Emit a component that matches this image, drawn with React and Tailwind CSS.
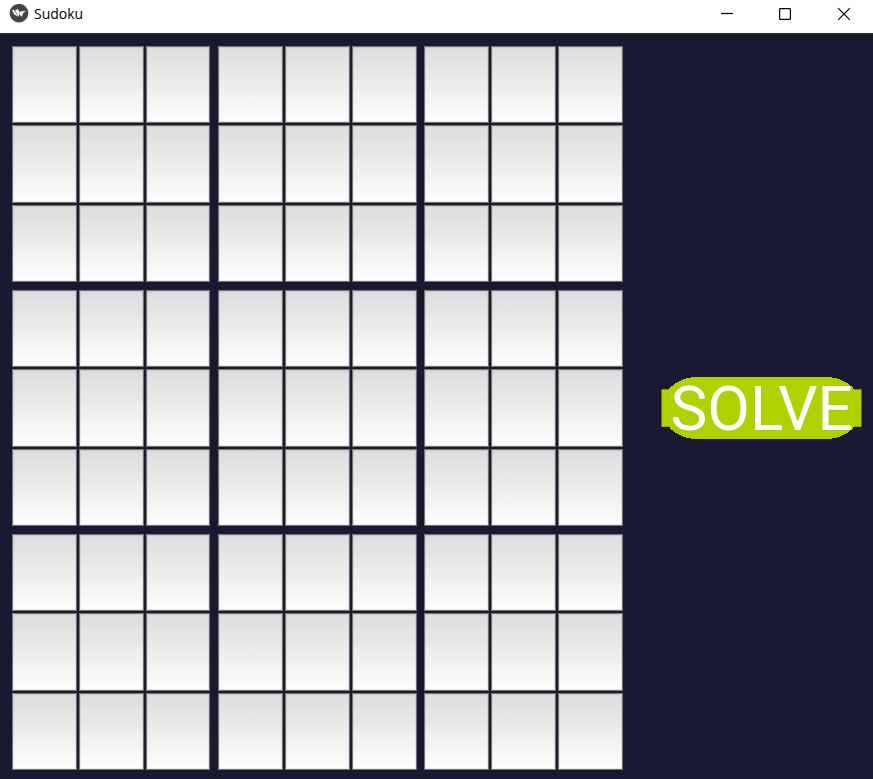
import React from "react";

const three = [0, 1, 2];
const nine = [0, 1, 2, 3, 4, 5, 6, 7, 8];

function TitleBar() {
  return (
    <header className="flex h-[33px] items-start justify-between bg-white">
      <div className="flex h-[27px] items-center pl-[9px]">
        <svg className="mt-px h-5 w-5" viewBox="0 0 20 20">
          <circle cx="10" cy="9.2" r="9.3" fill="#424548" />
          <path d="M2.8 6.2 4.6 5.8 9.6 12.8 5.4 10.4Z" fill="#fff" />
          <path d="M6 6.6 8.6 5 10.8 8.6 9.8 12.4Z" fill="#fff" />
          <path d="M11.2 7.4 17.2 6.8 14.4 8.8 12.6 12.8 10.6 10.6Z" fill="#fff" />
        </svg>
        <span className="ml-[5px] font-['Open_Sans',sans-serif] text-[14px] leading-5 text-black">
          Sudoku
        </span>
      </div>
      <svg className="h-[33px] w-[173px]" viewBox="0 0 173 33" fill="none" stroke="#000" strokeWidth="1.2">
        <path d="M21 13.5H33" />
        <rect x="79.6" y="8.6" width="10.8" height="10.8" rx="0.7" />
        <path d="M138.2 8.2 149.8 19.8M149.8 8.2 138.2 19.8" />
      </svg>
    </header>
  );
}

function Block() {
  return (
    <div className="grid grid-cols-[64.8px_64.8px_64.8px] grid-rows-3 gap-x-[2px] gap-y-[2px] bg-[#1d1b2b]">
      {nine.map((n) => (
        <div
          key={n}
          className="border border-t-[#77777a] border-r-[#707075] border-b-[#70736f] border-l-[#77777a] bg-linear-to-b from-[#dcdcdc] to-[#fefefe] shadow-[inset_0_0_0_1px_rgba(90,90,90,0.12)]"
        />
      ))}
    </div>
  );
}

function SolveButton() {
  return (
    <button className="block h-[64px] w-[202px]">
      <svg className="h-[64px] w-[202px] overflow-visible" viewBox="0 0 202 64">
        <g fill="#afd100">
          <rect x="0.5" y="1" width="200" height="62" rx="35" ry="31" shapeRendering="crispEdges" />
          <rect x="0.5" y="13.3" width="200" height="37.5" />
        </g>
        <path d="M184 6Q197 15 200 31" fill="none" stroke="#c5dc62" strokeWidth="0.6" strokeDasharray="1 1.5" />
        <text
          x="9.4"
          y="54.3"
          fill="#fff"
          fontSize="62"
          textLength="182.5"
          lengthAdjust="spacingAndGlyphs"
          className="font-['Roboto',sans-serif]"
        >
          SOLVE
        </text>
      </svg>
    </button>
  );
}

export default function App() {
  return (
    <div className="flex h-[779px] w-[873px] flex-col overflow-hidden bg-[#1a1932]">
      <TitleBar />
      <main className="flex flex-1 border-t border-[#30303c] pl-[12px] pt-[12px]">
        <div className="grid h-[724px] w-[611.5px] grid-cols-[198.4px_198.4px_198.4px] grid-rows-3 gap-x-[7.8px] gap-y-[7.8px]">
          {three.map((r) => three.map((c) => <Block key={`${r}-${c}`} />))}
        </div>
        <aside className="ml-[37.5px] flex h-[724px] items-center">
          <SolveButton />
        </aside>
      </main>
    </div>
  );
}
